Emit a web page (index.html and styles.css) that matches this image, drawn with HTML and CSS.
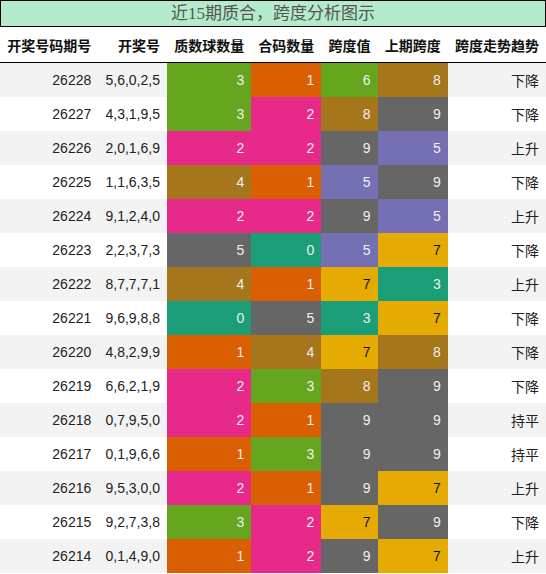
FILE: index.html
```html
<!DOCTYPE html>
<html lang="zh-CN">
<head>
    <meta charset="UTF-8">
    <title>近15期质合，跨度分析图示</title>
    <link rel="stylesheet" href="styles.css">
</head>
<body>
    <div class="title">近15期质合，跨度分析图示</div>
    <table class="chart">
        <thead>
            <tr>
                <th>开奖号码期号</th>
                <th>开奖号</th>
                <th>质数球数量</th>
                <th>合码数量</th>
                <th>跨度值</th>
                <th>上期跨度</th>
                <th>跨度走势趋势</th>
            </tr>
        </thead>
        <tbody>
            <tr><td>26228</td><td>5,6,0,2,5</td><td class="c-green">3</td><td class="c-orange">1</td><td class="c-green">6</td><td class="c-brown">8</td><td>下降</td></tr>
            <tr><td>26227</td><td>4,3,1,9,5</td><td class="c-green">3</td><td class="c-pink">2</td><td class="c-brown">8</td><td class="c-gray">9</td><td>下降</td></tr>
            <tr><td>26226</td><td>2,0,1,6,9</td><td class="c-pink">2</td><td class="c-pink">2</td><td class="c-gray">9</td><td class="c-purple">5</td><td>上升</td></tr>
            <tr><td>26225</td><td>1,1,6,3,5</td><td class="c-brown">4</td><td class="c-orange">1</td><td class="c-purple">5</td><td class="c-gray">9</td><td>下降</td></tr>
            <tr><td>26224</td><td>9,1,2,4,0</td><td class="c-pink">2</td><td class="c-pink">2</td><td class="c-gray">9</td><td class="c-purple">5</td><td>上升</td></tr>
            <tr><td>26223</td><td>2,2,3,7,3</td><td class="c-gray">5</td><td class="c-teal">0</td><td class="c-purple">5</td><td class="c-yellow">7</td><td>下降</td></tr>
            <tr><td>26222</td><td>8,7,7,7,1</td><td class="c-brown">4</td><td class="c-orange">1</td><td class="c-yellow">7</td><td class="c-teal">3</td><td>上升</td></tr>
            <tr><td>26221</td><td>9,6,9,8,8</td><td class="c-teal">0</td><td class="c-gray">5</td><td class="c-teal">3</td><td class="c-yellow">7</td><td>下降</td></tr>
            <tr><td>26220</td><td>4,8,2,9,9</td><td class="c-orange">1</td><td class="c-brown">4</td><td class="c-yellow">7</td><td class="c-brown">8</td><td>下降</td></tr>
            <tr><td>26219</td><td>6,6,2,1,9</td><td class="c-pink">2</td><td class="c-green">3</td><td class="c-brown">8</td><td class="c-gray">9</td><td>下降</td></tr>
            <tr><td>26218</td><td>0,7,9,5,0</td><td class="c-pink">2</td><td class="c-orange">1</td><td class="c-gray">9</td><td class="c-gray">9</td><td>持平</td></tr>
            <tr><td>26217</td><td>0,1,9,6,6</td><td class="c-orange">1</td><td class="c-green">3</td><td class="c-gray">9</td><td class="c-gray">9</td><td>持平</td></tr>
            <tr><td>26216</td><td>9,5,3,0,0</td><td class="c-pink">2</td><td class="c-orange">1</td><td class="c-gray">9</td><td class="c-yellow">7</td><td>上升</td></tr>
            <tr><td>26215</td><td>9,2,7,3,8</td><td class="c-green">3</td><td class="c-pink">2</td><td class="c-yellow">7</td><td class="c-gray">9</td><td>下降</td></tr>
            <tr><td>26214</td><td>0,1,4,9,0</td><td class="c-orange">1</td><td class="c-pink">2</td><td class="c-gray">9</td><td class="c-yellow">7</td><td>上升</td></tr>
        </tbody>
    </table>
</body>
</html>
```

FILE: styles.css
```css
body { margin: 0; font-family: "Liberation Sans", "Noto Sans CJK SC", sans-serif; background: #fff; color: #222; }
.title { height: 25px; line-height: 25px; border: 1px solid #000; background: #b3ebcc; color: #555; text-align: center; font-size: 17px; font-family: "Liberation Serif", "Noto Sans CJK SC", serif; }
.chart { width: 100%; border-collapse: collapse; font-size: 14px; }
.chart th, .chart td { padding: 0 7px; text-align: right; white-space: nowrap; }
.chart th { height: 35px; font-weight: bold; color: #111; border-bottom: 1px solid #000; }
.chart td { height: 34px; }
.chart tbody tr:nth-child(odd) { background: #f3f3f3; }
.chart tbody tr:nth-child(even) { background: #fff; }
.c-green, .c-orange, .c-pink, .c-brown, .c-gray, .c-purple, .c-teal { color: #f0f0f0; }
.chart .c-green { background: #66a61e; }
.chart .c-orange { background: #d95f02; }
.chart .c-pink { background: #e7298a; }
.chart .c-brown { background: #a6761d; }
.chart .c-gray { background: #666666; }
.chart .c-purple { background: #7570b3; }
.chart .c-teal { background: #1b9e77; }
.chart .c-yellow { background: #e6ab02; color: #111; }
```
